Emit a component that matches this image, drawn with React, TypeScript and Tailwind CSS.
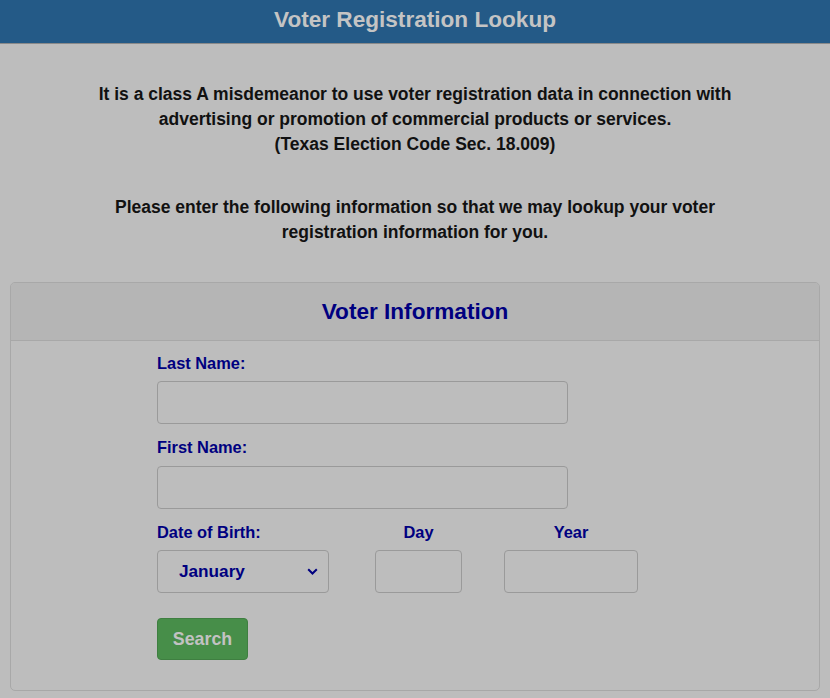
export default function App() {
  return (
    <div className="min-h-[698px] bg-[#bdbdbd] font-['Liberation_Sans',Arial,sans-serif] font-bold">
      <header className="h-[44px] bg-[#245a87] border-b border-[#8a8a8a] flex items-center justify-center">
        <h1 className="text-[22.6px] text-[#c4c4c4] leading-none -mt-[3px]">Voter Registration Lookup</h1>
      </header>

      <div className="pt-[38px] text-center text-[17.5px] leading-[25px] text-[#111]">
        <p>
          It is a class A misdemeanor to use voter registration data in connection with
          <br />
          advertising or promotion of commercial products or services.
          <br />
          (Texas Election Code Sec. 18.009)
        </p>
        <p className="mt-[38px]">
          Please enter the following information so that we may lookup your voter
          <br />
          registration information for you.
        </p>
      </div>

      <section className="mt-[37px] mx-[10px] border border-[#a8a8a8] rounded-[5px] overflow-hidden">
        <div className="h-[58px] bg-[#b5b5b5] border-b border-[#a8a8a8] flex items-center justify-center">
          <h2 className="text-[22.6px] text-[#000080] leading-none pt-[2px]">Voter Information</h2>
        </div>

        <div className="pl-[146px] pt-[12px] pb-[30px] text-[#000080]">
          <label className="block text-[16.4px] leading-[20px]">Last Name:</label>
          <input className="mt-[8px] block w-[411px] h-[43px] border border-[#9a9a9a] rounded-[4px] bg-transparent" />

          <label className="block mt-[13px] text-[16.4px] leading-[20px]">First Name:</label>
          <input className="mt-[9px] block w-[411px] h-[43px] border border-[#9a9a9a] rounded-[4px] bg-transparent" />

          <div className="mt-[13px] flex items-end">
            <div className="w-[172px]">
              <label className="block text-[16.4px] leading-[20px]">Date of Birth:</label>
              <div className="mt-[8px] h-[43px] border border-[#9a9a9a] rounded-[4px] flex items-center justify-between pl-[21px] pr-[10px]">
                <span className="text-[17.2px]">January</span>
                <svg width="11" height="7" viewBox="0 0 11 7" fill="none">
                  <path d="M1.2 1.2 L5.5 5.5 L9.8 1.2" stroke="#000080" strokeWidth="2" />
                </svg>
              </div>
            </div>
            <div className="ml-[46px] w-[87px] text-center">
              <label className="block text-[16.4px] leading-[20px]">Day</label>
              <input className="mt-[8px] block w-[87px] h-[43px] border border-[#9a9a9a] rounded-[4px] bg-transparent" />
            </div>
            <div className="ml-[42px] w-[134px] text-center">
              <label className="block text-[16.4px] leading-[20px]">Year</label>
              <input className="mt-[8px] block w-[134px] h-[43px] border border-[#9a9a9a] rounded-[4px] bg-transparent" />
            </div>
          </div>

          <button className="mt-[25px] w-[91px] h-[42px] bg-[#478e49] border border-[#3f7f41] rounded-[4px] text-[17.8px] text-[#c2c2c2]">
            Search
          </button>
        </div>
      </section>
    </div>
  );
}
